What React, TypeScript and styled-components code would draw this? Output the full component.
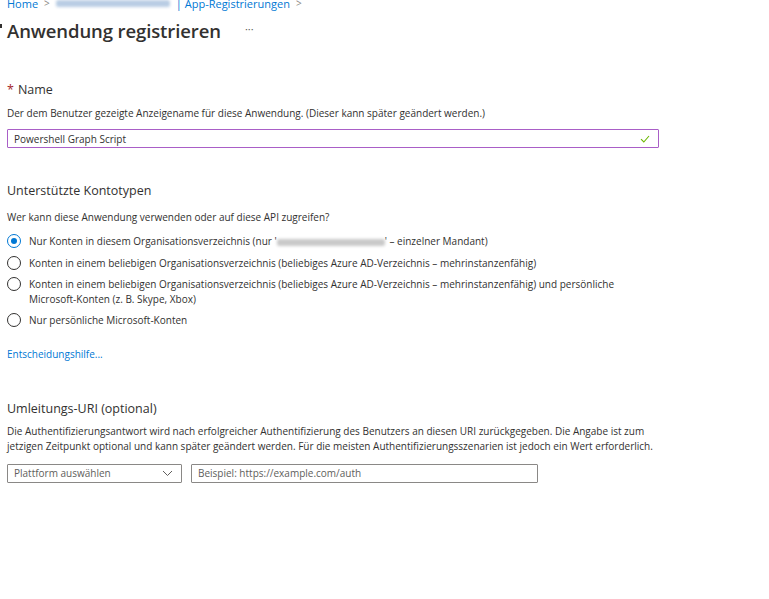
import React from "react";
import styled, { createGlobalStyle } from "styled-components";

const Global = createGlobalStyle`
  html, body { margin: 0; padding: 0; background: #fff; }
  body { font-family: "Open Sans", "Noto Sans", sans-serif; color: #323130; }
  * { box-sizing: border-box; }
`;

const Page = styled.div`
  width: 769px;
  height: 599px;
  overflow: hidden;
  padding: 0 0 0 7px;
  position: relative;
`;

const Crumbs = styled.div`
  display: flex;
  align-items: center;
  gap: 6px;
  margin-top: -5px;
  height: 16px;
  font-size: 11px;
  color: #0078d4;
  white-space: nowrap;
`;

const Chev = styled.span`
  color: #8a8886;
  font-size: 10px;
`;

const Blur = styled.span<{ $w: number }>`
  display: inline-block;
  width: ${(p) => p.$w}px;
  height: 7px;
  background: ${(p) => p.color || "#b9cde4"};
  filter: blur(1.6px);
  border-radius: 2px;
  vertical-align: middle;
`;

const TitleRow = styled.div`
  display: flex;
  align-items: center;
  margin-top: 5px;
  height: 28px;
`;

const Title = styled.h1`
  margin: 0;
  font-size: 18.5px;
  font-weight: 600;
  color: #323130;
  letter-spacing: -0.1px;
`;

const More = styled.span`
  margin-left: 24px;
  font-size: 11px;
  color: #605e5c;
  margin-top: -4px;
`;

const Edge = styled.span`
  position: absolute;
  left: 0;
  top: 24px;
  width: 2px;
  height: 4px;
  background: #323130;
`;

const SectionTitle = styled.div<{ $top: number }>`
  margin-top: ${(p) => p.$top}px;
  font-size: 12.5px;
  color: #323130;
  line-height: 16px;
`;

const Req = styled.span`
  color: #a4262c;
  margin-right: 4px;
`;

const Desc = styled.p<{ $top: number }>`
  margin: ${(p) => p.$top}px 0 0;
  font-size: 10px;
  line-height: 15px;
  color: #323130;
  width: 655px;
`;

const TextInput = styled.div<{ $w: number; $valid?: boolean; $top?: number }>`
  display: flex;
  align-items: center;
  justify-content: space-between;
  width: ${(p) => p.$w}px;
  height: 19px;
  margin-top: ${(p) => p.$top ?? 0}px;
  border: 1px solid ${(p) => (p.$valid ? "#a95ec7" : "#8a8886")};
  border-radius: 1px;
  padding: 0 8px 0 6px;
  font-size: 10px;
  color: ${(p) => (p.$valid ? "#323130" : "#605e5c")};
  background: #fff;
`;

const Radios = styled.div`
  display: flex;
  flex-direction: column;
  margin-top: 9px;
  gap: 7px;
`;

const RadioRow = styled.div`
  display: flex;
  align-items: flex-start;
  gap: 8px;
  font-size: 10px;
  line-height: 14.5px;
`;

const Circle = styled.span<{ $on?: boolean }>`
  flex: none;
  width: 14px;
  height: 14px;
  border-radius: 50%;
  border: 1px solid ${(p) => (p.$on ? "#0078d4" : "#323130")};
  display: flex;
  align-items: center;
  justify-content: center;
  &::after {
    content: "";
    display: ${(p) => (p.$on ? "block" : "none")};
    width: 6px;
    height: 6px;
    border-radius: 50%;
    background: #0078d4;
  }
`;

const Link = styled.a`
  display: block;
  margin-top: 19px;
  font-size: 10px;
  color: #0078d4;
  text-decoration: none;
  line-height: 15px;
`;

const UriRow = styled.div`
  display: flex;
  gap: 9px;
  margin-top: 10px;
`;

export default function App() {
  return (
    <>
      <Global />
      <Page>
        <Edge />
        <Crumbs>
          <span>Home</span>
          <Chev>&gt;</Chev>
          <Blur $w={114} />
          <span>| App-Registrierungen</span>
          <Chev>&gt;</Chev>
        </Crumbs>
        <TitleRow>
          <Title>Anwendung registrieren</Title>
          <More>···</More>
        </TitleRow>

        <SectionTitle $top={38}>
          <Req>*</Req>Name
        </SectionTitle>
        <Desc $top={8}>
          Der dem Benutzer gezeigte Anzeigename für diese Anwendung. (Dieser kann später geändert werden.)
        </Desc>
        <TextInput $w={652} $valid $top={8}>
          <span>Powershell Graph Script</span>
          <svg width="10" height="8" viewBox="0 0 10 8">
            <path d="M1 4.2 L3.8 7 L9 1" fill="none" stroke="#6bb700" strokeWidth="1.1" />
          </svg>
        </TextInput>

        <SectionTitle $top={35}>Unterstützte Kontotypen</SectionTitle>
        <Desc $top={11}>Wer kann diese Anwendung verwenden oder auf diese API zugreifen?</Desc>
        <Radios>
          <RadioRow>
            <Circle $on />
            <span>
              Nur Konten in diesem Organisationsverzeichnis (nur '<Blur $w={108} color="#c9c9c9" />' – einzelner Mandant)
            </span>
          </RadioRow>
          <RadioRow>
            <Circle />
            <span>Konten in einem beliebigen Organisationsverzeichnis (beliebiges Azure AD-Verzeichnis – mehrinstanzenfähig)</span>
          </RadioRow>
          <RadioRow>
            <Circle />
            <span>
              Konten in einem beliebigen Organisationsverzeichnis (beliebiges Azure AD-Verzeichnis – mehrinstanzenfähig) und persönliche
              <br />
              Microsoft-Konten (z. B. Skype, Xbox)
            </span>
          </RadioRow>
          <RadioRow>
            <Circle />
            <span>Nur persönliche Microsoft-Konten</span>
          </RadioRow>
        </Radios>

        <Link>Entscheidungshilfe...</Link>

        <SectionTitle $top={39}>Umleitungs-URI (optional)</SectionTitle>
        <Desc $top={7}>
          Die Authentifizierungsantwort wird nach erfolgreicher Authentifizierung des Benutzers an diesen URI zurückgegeben. Die Angabe ist zum jetzigen Zeitpunkt optional und kann später geändert werden. Für die meisten Authentifizierungsszenarien ist jedoch ein Wert erforderlich.
        </Desc>
        <UriRow>
          <TextInput $w={175}>
            <span>Plattform auswählen</span>
            <svg width="11" height="7" viewBox="0 0 11 7">
              <path d="M1 1 L5.5 5.5 L10 1" fill="none" stroke="#605e5c" strokeWidth="1" />
            </svg>
          </TextInput>
          <TextInput $w={347}>
            <span>Beispiel: https://example.com/auth</span>
          </TextInput>
        </UriRow>
      </Page>
    </>
  );
}
